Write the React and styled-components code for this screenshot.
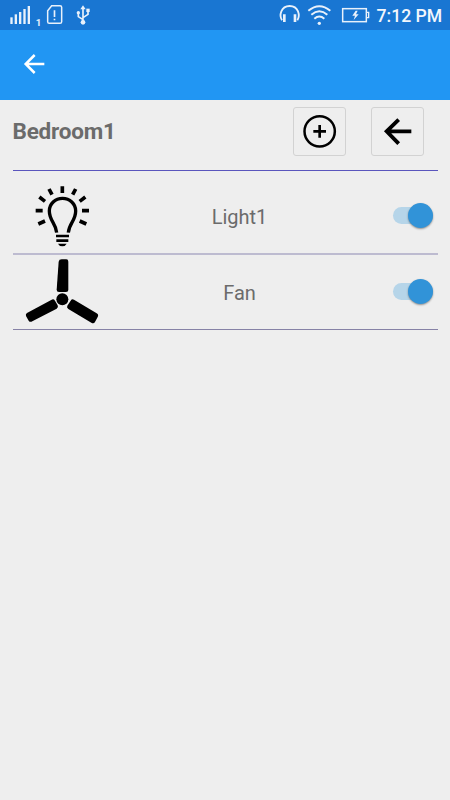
import { useState } from "react";
import styled, { createGlobalStyle } from "styled-components";

const devices = [
  { id: "light1", name: "Light1", icon: LightIcon },
  { id: "fan", name: "Fan", icon: FanIcon },
];

export default function App() {
  const [active, setActive] = useState({ light1: true, fan: true });

  const toggle = (id) => setActive({ ...active, [id]: !active[id] });

  return (
    <>
      <GlobalStyle />
      <Screen>
        <StatusBar>
          <StatusLeft />
          <StatusRight />
          <Clock>7:12 PM</Clock>
        </StatusBar>
        <AppBar>
          <BackIcon />
        </AppBar>
        <Content>
          <RoomHeader>
            <RoomName>Bedroom1</RoomName>
            <Actions>
              <ActionButton aria-label="Add device">
                <AddIcon />
              </ActionButton>
              <ActionButton aria-label="Back">
                <ArrowIcon />
              </ActionButton>
            </Actions>
          </RoomHeader>
          {devices.map(({ id, name, icon: Icon }) => (
            <DeviceRow key={id} $type={id}>
              <Icon />
              <DeviceName $type={id}>{name}</DeviceName>
              <Switch
                role="switch"
                aria-label={name}
                aria-checked={active[id]}
                $type={id}
                $on={active[id]}
                onClick={() => toggle(id)}
              >
                <Thumb $on={active[id]} />
              </Switch>
            </DeviceRow>
          ))}
        </Content>
      </Screen>
    </>
  );
}

function StatusLeft() {
  return (
    <svg width="100" height="30" viewBox="0 0 300 90" fill="#e9f1fb">
      <rect x="31" y="52" width="7" height="20" />
      <rect x="44" y="43" width="7" height="29" />
      <rect x="57" y="36" width="7" height="36" />
      <rect x="70" y="27" width="7" height="45" />
      <rect x="83" y="18" width="7" height="54" />
      <StatusDigit x="107" y="77">
        1
      </StatusDigit>
      <path
        d="M155 17H180Q185 17 185 22V65Q185 70 180 70H148Q143 70 143 65V32Z"
        fill="none"
        stroke="#e9f1fb"
        strokeWidth="4.5"
      />
      <path d="M161 31H166V51H161ZM161 56H166V61H161Z" />
      <path
        d="M249 67V25M249 59L235 50V39M249 53L264 43V33"
        fill="none"
        stroke="#e9f1fb"
        strokeWidth="5"
      />
      <path d="M241 28L249 16L257 28Z" />
      <circle cx="249" cy="67" r="7" />
      <circle cx="235" cy="38" r="5" />
      <rect x="259" y="26" width="10" height="10" />
    </svg>
  );
}

function StatusRight() {
  return (
    <svg width="100" height="30" viewBox="0 0 300 90" fill="none" stroke="#e9f1fb">
      <path d="M36 61C27 47 32 18 59 18C86 18 91 47 82 61" strokeWidth="5.5" />
      <path d="M39 43V66H47V43ZM71 43V66H79V43Z" fill="#e9f1fb" stroke="none" />
      <path d="M115 32Q148 5 181 32" strokeWidth="6" />
      <path d="M124 44Q148 24 172 44" strokeWidth="6" />
      <path d="M133 56Q148 43 163 56" strokeWidth="6" />
      <circle cx="148" cy="70" r="5" fill="#e9f1fb" stroke="none" />
      <rect x="218" y="26" width="71" height="39" strokeWidth="4.5" />
      <path d="M291 37H296V53H291" strokeWidth="4" />
      <path d="M257 32L247 47H255L251 60L266 43H258L263 32Z" fill="#e9f1fb" stroke="none" />
    </svg>
  );
}

function BackIcon() {
  return (
    <svg width="22" height="22" viewBox="0 0 66 66" fill="none" stroke="#fff" strokeWidth="7.5">
      <path d="M64 33H9M35 6L8 33L35 60" />
    </svg>
  );
}

function AddIcon() {
  return (
    <svg width="34" height="34" viewBox="0 0 102 102" fill="none" stroke="#000">
      <circle cx="50" cy="52" r="45.5" strokeWidth="7.5" />
      <path d="M50 33V71M31 52H69" strokeWidth="8" />
    </svg>
  );
}

function ArrowIcon() {
  return (
    <svg width="30" height="28" viewBox="0 0 90 84" fill="none" stroke="#000" strokeWidth="11.5">
      <path d="M85 43H12M47 8L11 43L47 80" />
    </svg>
  );
}

function LightIcon() {
  return (
    <svg width="100" height="82" viewBox="0 -12 300 246" fill="none" stroke="#000">
      <path
        d="M134 173C132 144 112 138 112 108A39.5 38 0 0 1 191 108C191 138 171 144 169 173"
        strokeWidth="10"
      />
      <path
        d="M151 34V54M111 42L120 59M191 42L182 59M82 66L99 79M220 66L203 79M71 107H92M231 107H210M79 147L99 138M223 147L203 138"
        strokeWidth="11"
      />
      <path d="M132 183H171M133 197H169" strokeWidth="8" />
      <path d="M138 206H164Q160 214 151 214Q142 214 138 206Z" fill="#000" stroke="none" />
    </svg>
  );
}

function FanIcon() {
  return (
    <svg width="100" height="74" viewBox="0 240 300 222" fill="#000">
      <circle cx="151" cy="373" r="18" />
      <path d="M149 253H163Q169 253 169 260V345Q169 351 162 351H141Q134 351 134 344L140 260Q141 253 149 253Z" />
      <path d="M45 414L119 374Q125 371 129 377L137 391Q140 397 134 401L61 439Q54 443 50 437L42 423Q40 417 45 414Z" />
      <path d="M186 374L254 415Q261 419 257 426L249 441Q245 447 238 443L169 402Q163 398 166 392L176 377Q180 370 186 374Z" />
    </svg>
  );
}

const GlobalStyle = createGlobalStyle`
  * {
    box-sizing: border-box;
  }

  body {
    margin: 0;
    background: #eee;
    font-family: Roboto, sans-serif;
  }

  svg {
    display: block;
    flex-shrink: 0;
  }
`;

const Screen = styled.div`
  width: 450px;
  height: 800px;
  overflow: hidden;
  background: #eee;
`;

const StatusBar = styled.header`
  display: flex;
  justify-content: space-between;
  height: 30px;
  background: #1976d2;

  svg:first-child {
    margin-right: auto;
  }
`;

const StatusDigit = styled.text`
  font-size: 29px;
  font-weight: 700;
`;

const Clock = styled.span`
  width: 80px;
  padding-left: 6.5px;
  color: #f2f6fc;
  font-size: 17.6px;
  font-weight: 500;
  line-height: 32px;
  white-space: nowrap;
`;

const AppBar = styled.nav`
  display: flex;
  align-items: center;
  height: 70px;
  padding: 0 0 2px 23px;
  background: #2196f3;
`;

const Content = styled.main`
  padding: 0 12.5px;
`;

const RoomHeader = styled.div`
  display: flex;
  justify-content: space-between;
  height: 71px;
  padding: 7px 13.5px 0 0;
  border-bottom: 1px solid #5a55bd;
`;

const RoomName = styled.h1`
  margin: 0;
  color: #6b6b6b;
  font-size: 22.5px;
  font-weight: 700;
  letter-spacing: -0.2px;
  line-height: 49px;
`;

const Actions = styled.div`
  display: flex;
  gap: 25px;
`;

const ActionButton = styled.button`
  display: flex;
  align-items: center;
  justify-content: center;
  width: 53px;
  height: 49px;
  padding: 0 0 2px;
  border: 1px solid #d2d2d2;
  border-radius: 3px;
  background: transparent;
`;

const DeviceRow = styled.div`
  display: grid;
  grid-template-columns: 100px 1fr 58px;
  align-items: center;
  height: ${({ $type }) => ($type === "fan" ? "75px" : "84px")};
  border-bottom: ${({ $type }) =>
    $type === "fan" ? "1px solid #8682a6" : "2px solid #bdbbd0"};

  > svg {
    margin-left: -0.5px;
  }
`;

const DeviceName = styled.span`
  padding: ${({ $type }) => ($type === "fan" ? "2px" : "10px")} 13px 0 0;
  color: #6b6b6b;
  font-size: 20px;
  line-height: 24px;
  text-align: center;
`;

const Switch = styled.button`
  display: flex;
  align-items: center;
  justify-content: ${({ $on }) => ($on ? "flex-end" : "flex-start")};
  width: 40px;
  height: 17px;
  margin: ${({ $type }) => ($type === "fan" ? "0 0 2px" : "7px 0 0")} 13px;
  padding: 0;
  border: 0;
  border-radius: 9px;
  background: ${({ $on }) => ($on ? "#b6d5e9" : "#bbb")};
`;

const Thumb = styled.span`
  flex-shrink: 0;
  width: 25px;
  height: 25px;
  border-radius: 50%;
  background: ${({ $on }) => ($on ? "#3193d8" : "#fafafa")};
  box-shadow: 0 1px 2px rgba(0, 0, 0, 0.4);
`;
